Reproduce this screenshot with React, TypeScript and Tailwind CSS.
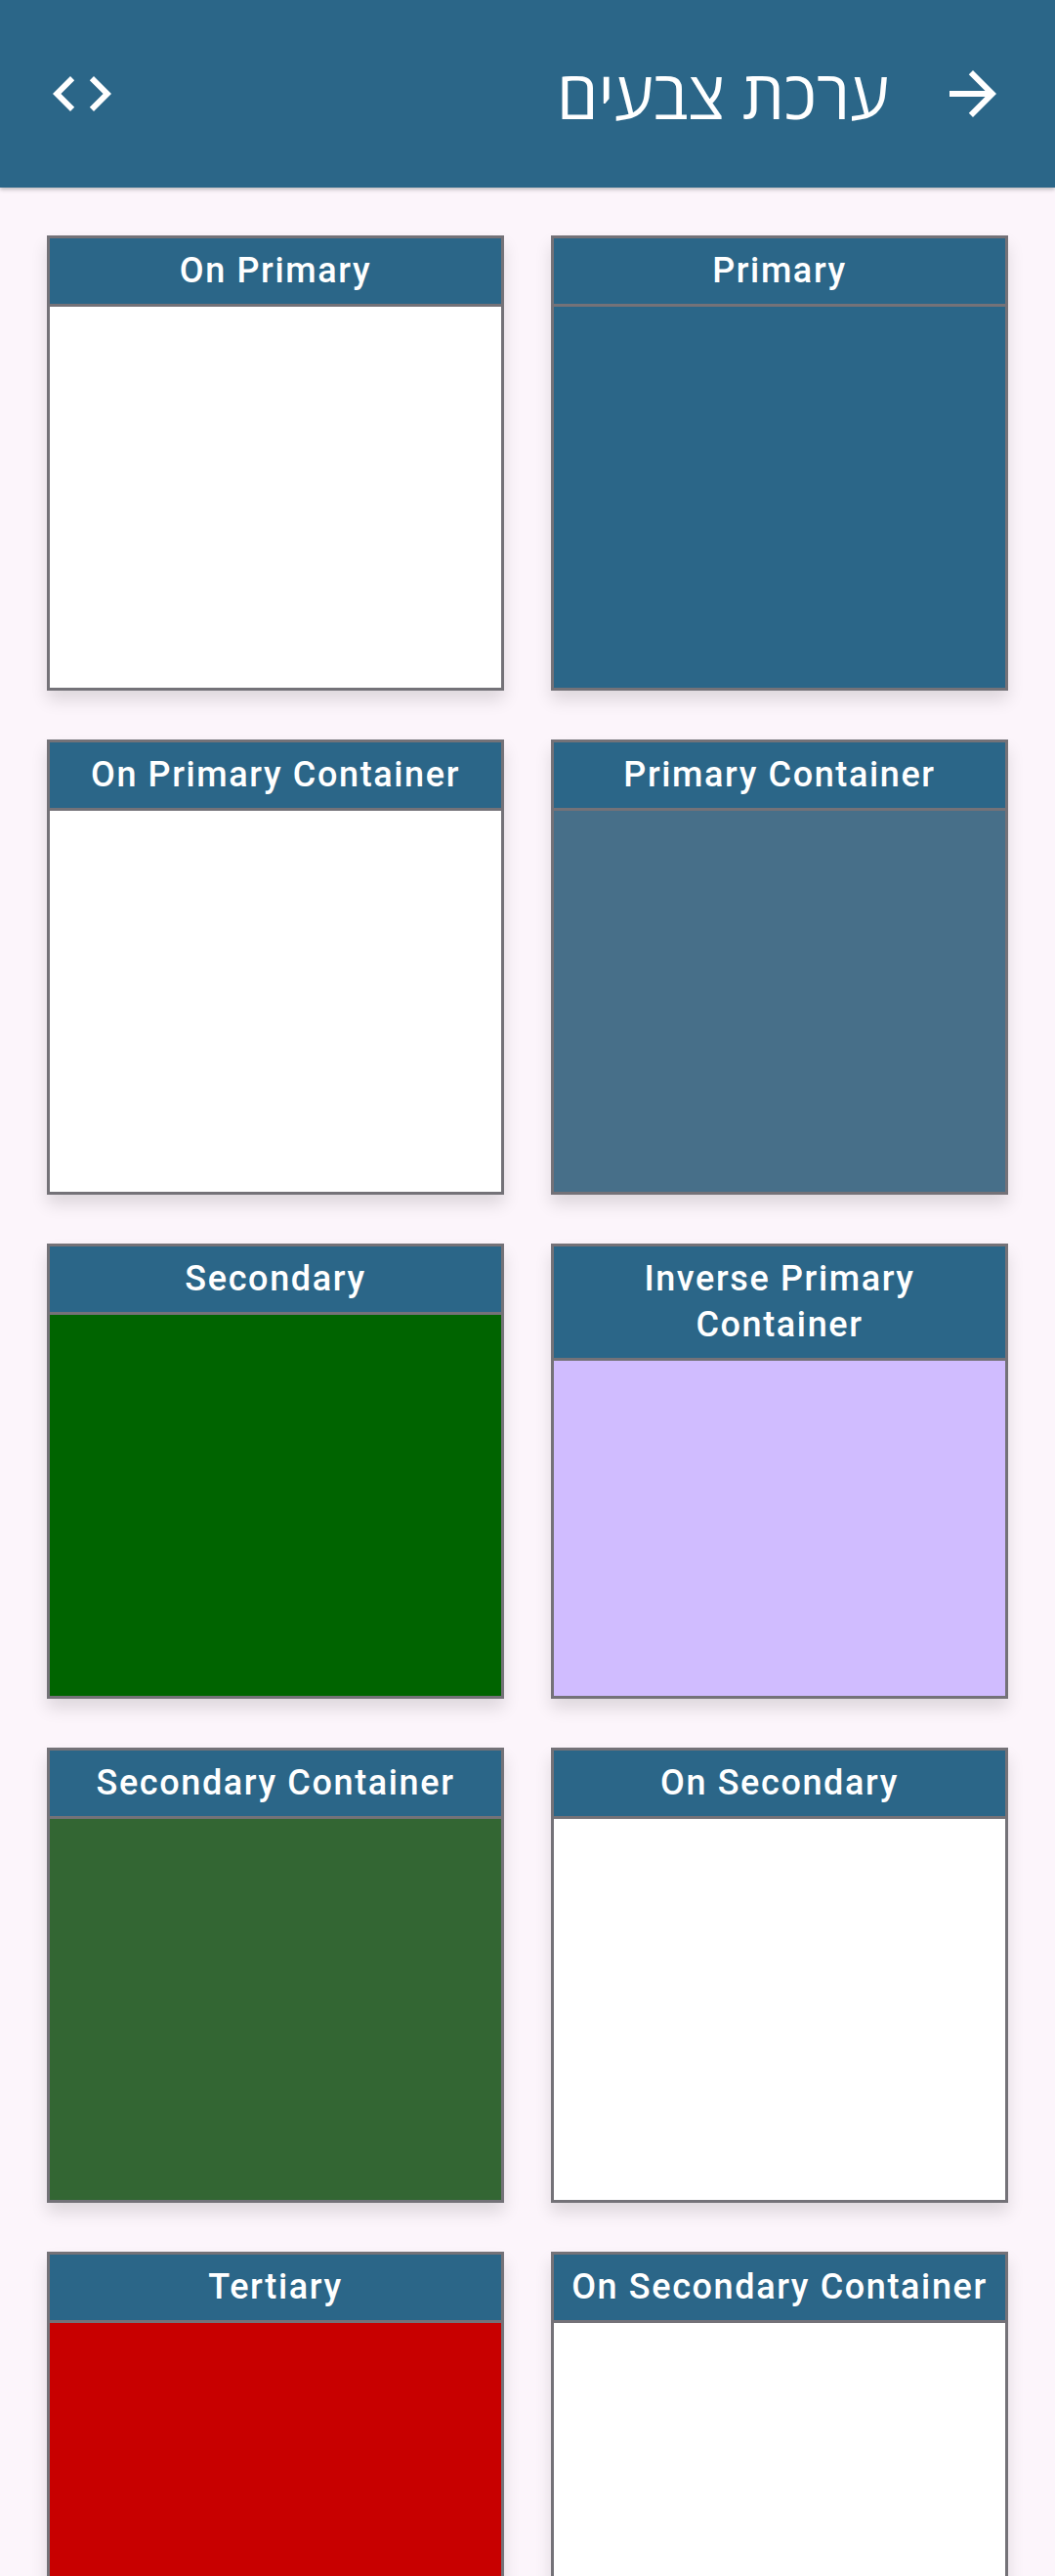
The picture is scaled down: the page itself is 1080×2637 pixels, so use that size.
import React from "react";

type Swatch = { name: string; color: string };

// listed in reading order (right to left)
const swatches: Swatch[] = [
  { name: "Primary", color: "bg-[#2b6688]" },
  { name: "On Primary", color: "bg-white" },
  { name: "Primary Container", color: "bg-[#476f89]" },
  { name: "On Primary Container", color: "bg-white" },
  { name: "Inverse Primary Container", color: "bg-[#d0bcff]" },
  { name: "Secondary", color: "bg-[#006400]" },
  { name: "On Secondary", color: "bg-white" },
  { name: "Secondary Container", color: "bg-[#336633]" },
  { name: "On Secondary Container", color: "bg-white" },
  { name: "Tertiary", color: "bg-[#c80000]" },
];

function ArrowForward() {
  return (
    <svg viewBox="0 0 24 24" className="h-[72px] w-[72px]" fill="white">
      <path d="M12 4l-1.41 1.41L16.17 11H4v2h12.17l-5.58 5.59L12 20l8-8z" />
    </svg>
  );
}

function CodeIcon() {
  return (
    <svg viewBox="0 0 24 24" className="h-[72px] w-[72px]" fill="white">
      <path d="M9.4 16.6L4.8 12l4.6-4.6L8 6l-6 6 6 6 1.4-1.4zm5.2 0l4.6-4.6-4.6-4.6L16 6l6 6-6 6-1.4-1.4z" />
    </svg>
  );
}

function ColorCard({ name, color }: Swatch) {
  return (
    <div className="flex h-[466px] flex-col border-[3px] border-[#747278] shadow-[0_10px_16px_rgba(0,0,0,0.12)]">
      <div
        dir="ltr"
        className="border-b-[3px] border-[#747278] bg-[#2b6688] px-2 py-[10px] text-center text-[36px] font-medium leading-[47px] tracking-[0.045em] text-white"
        style={{ fontFamily: "Roboto, 'Liberation Sans', sans-serif" }}
      >
        {name}
      </div>
      <div className={`flex-1 ${color}`} />
    </div>
  );
}

export default function App() {
  return (
    <div dir="rtl" className="min-h-screen bg-[#fcf5fb]">
      {/* top bar */}
      <header className="flex h-[192px] items-center bg-[#2b6688] px-12 shadow-[0_2px_4px_rgba(0,0,0,0.25)]">
        <ArrowForward />
        <h1
          className="mr-[50px] text-[68px] font-normal leading-none text-white"
          style={{ fontFamily: "'Open Sans', 'DejaVu Sans', sans-serif" }}
        >
          ערכת צבעים
        </h1>
        <div className="flex-1" />
        <CodeIcon />
      </header>

      {/* color grid */}
      <main className="grid grid-cols-2 gap-x-12 gap-y-[50px] px-12 pt-[49px] pb-12">
        {swatches.map((s) => (
          <ColorCard key={s.name} {...s} />
        ))}
      </main>
    </div>
  );
}
